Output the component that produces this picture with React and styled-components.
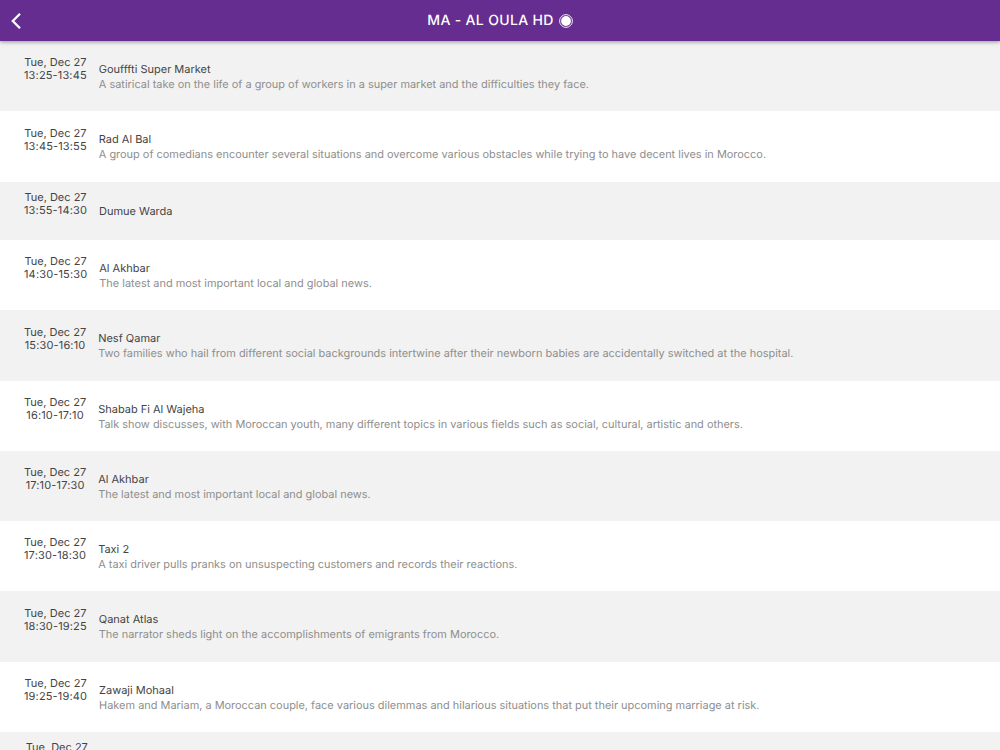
import React from "react";
import styled, { createGlobalStyle } from "styled-components";

const Global = createGlobalStyle`
  html, body { margin: 0; padding: 0; height: 750px; overflow: hidden; background: #fff; }
  body {
    font-family: Inter, Roboto, "Liberation Sans", sans-serif;
    text-rendering: geometricPrecision;
  }
`;
const Page = styled.div`
  height: 750px;
  overflow: hidden;
  display: flex;
  flex-direction: column;
`;
const Header = styled.header`
  position: relative;
  z-index: 1;
  flex: none;
  height: 41px;
  display: flex;
  align-items: center;
  justify-content: center;
  background: #642d8f;
  box-shadow: 0 1px 4px rgba(0, 0, 0, 0.4);
`;
const Back = styled.button`
  position: absolute;
  left: 9px;
  top: 11px;
  width: 16px;
  height: 20px;
  padding: 0;
  border: 0;
  background: none;
  display: flex;
`;
const Title = styled.h1`
  margin: 0;
  display: flex;
  align-items: center;
  gap: 5px;
  font-size: 14px;
  font-weight: 500;
  letter-spacing: 0.33px;
  color: #fff;
`;
const List = styled.div`
  flex: 1;
  min-height: 0;
`;
const Row = styled.div`
  display: flex;
  align-items: center;
  min-height: 58.5px;
  padding-left: 24px;
  gap: 12px;
  background: ${(p) => (p.$alt ? "#f2f2f2" : "#fff")};
`;
const When = styled.div`
  flex: none;
  margin-bottom: 13.4px;
  text-align: center;
  font-size: 11px;
  line-height: 13px;
  color: #444;
`;
const Clock = styled.span`
  letter-spacing: 0.15px;
`;
const Body = styled.div`
  padding: 21px 0 19px;
  min-width: 0;
`;
const Name = styled.div`
  font-size: 11px;
  line-height: 15px;
  color: #444;
`;
const Desc = styled.div`
  font-size: 10.94px;
  line-height: 15.25px;
  color: #8e8e8e;
`;

const items = [
  ["13:25-13:45", "Goufffti Super Market", "A satirical take on the life of a group of workers in a super market and the difficulties they face."],
  ["13:45-13:55", "Rad Al Bal", "A group of comedians encounter several situations and overcome various obstacles while trying to have decent lives in Morocco."],
  ["13:55-14:30", "Dumue Warda", ""],
  ["14:30-15:30", "Al Akhbar", "The latest and most important local and global news."],
  ["15:30-16:10", "Nesf Qamar", "Two families who hail from different social backgrounds intertwine after their newborn babies are accidentally switched at the hospital."],
  ["16:10-17:10", "Shabab Fi Al Wajeha", "Talk show discusses, with Moroccan youth, many different topics in various fields such as social, cultural, artistic and others."],
  ["17:10-17:30", "Al Akhbar", "The latest and most important local and global news."],
  ["17:30-18:30", "Taxi 2", "A taxi driver pulls pranks on unsuspecting customers and records their reactions."],
  ["18:30-19:25", "Qanat Atlas", "The narrator sheds light on the accomplishments of emigrants from Morocco."],
  ["19:25-19:40", "Zawaji Mohaal", "Hakem and Mariam, a Moroccan couple, face various dilemmas and hilarious situations that put their upcoming marriage at risk."],
  ["19:40-20:00", "", ""],
];

export default function App() {
  return (
    <Page>
      <Global />
      <Header>
        <Back aria-label="Back">
          <svg width="16" height="20" viewBox="0 0 16 20" fill="none">
            <path d="M11 2.8 L3.8 10 L11 17.2" stroke="#fff" strokeWidth="2.3" />
          </svg>
        </Back>
        <Title>
          MA - AL OULA HD
          <svg width="14" height="14" viewBox="0 0 14 14">
            <circle cx="7" cy="7" r="6.4" fill="none" stroke="#fff" strokeWidth="0.9" />
            <circle cx="7" cy="7" r="4.9" fill="#fff" />
          </svg>
        </Title>
      </Header>
      <List>
        {items.map(([time, name, desc], i) => (
          <Row key={i} $alt={i % 2 === 0}>
            <When>
              Tue, Dec 27
              <br />
              <Clock>{time}</Clock>
            </When>
            <Body>
              <Name>{name}</Name>
              {desc && <Desc>{desc}</Desc>}
            </Body>
          </Row>
        ))}
      </List>
    </Page>
  );
}
